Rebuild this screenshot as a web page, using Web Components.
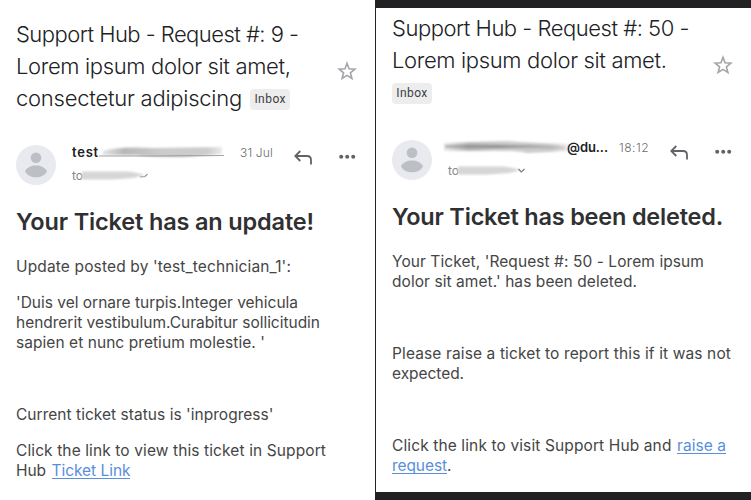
<!DOCTYPE html>
<html lang="en">
<head>
<meta charset="utf-8">
<title>Support Hub mail</title>
<style>
html,body{margin:0;height:500px;overflow:hidden;background:#fff}
body{font-family:Inter,"Liberation Sans",sans-serif;display:grid;grid-template-columns:375px 376px}
</style>
</head>
<body>
<mail-view>
  <mail-subject slot="subject">
    <fit-line width="282.5">Support Hub - Request #: 9 -</fit-line>
    <fit-line width="274.5">Lorem ipsum dolor sit amet,</fit-line>
    <fit-line width="226">consectetur adipiscing</fit-line>
    <mail-label>Inbox</mail-label>
  </mail-subject>
  <mail-sender slot="sender" kind="name">
    <fit-line slot="name" width="27">test</fit-line>
    <fit-line slot="time" width="33">31 Jul</fit-line>
  </mail-sender>
  <mail-body slot="body">
    <fit-line slot="heading" width="298">Your Ticket has an update!</fit-line>
    <mail-para><fit-line width="275">Update posted by 'test_technician_1':</fit-line></mail-para>
    <mail-para><fit-line width="282">'Duis vel ornare turpis.Integer vehicula</fit-line><br><fit-line width="304">hendrerit vestibulum.Curabitur sollicitudin</fit-line><br><fit-line width="249">sapien et nunc pretium molestie. '</fit-line></mail-para>
    <mail-para></mail-para>
    <mail-para><fit-line width="257.5">Current ticket status is 'inprogress'</fit-line></mail-para>
    <mail-para><fit-line width="310">Click the link to view this ticket in Support</fit-line><br><fit-line width="30">Hub</fit-line><mail-link gap><fit-line width="79">Ticket Link</fit-line></mail-link></mail-para>
  </mail-body>
</mail-view>
<mail-view framed>
  <mail-subject slot="subject">
    <fit-line width="297">Support Hub - Request #: 50 -</fit-line>
    <fit-line width="274.5">Lorem ipsum dolor sit amet.</fit-line>
    <mail-label below>Inbox</mail-label>
  </mail-subject>
  <mail-sender slot="sender" kind="domain">
    <fit-line slot="name" width="41">@du...</fit-line>
    <fit-line slot="time" width="30">18:12</fit-line>
  </mail-sender>
  <mail-body slot="body">
    <fit-line slot="heading" width="331">Your Ticket has been deleted.</fit-line>
    <mail-para><fit-line width="312">Your Ticket, 'Request #: 50 - Lorem ipsum</fit-line><br><fit-line width="245">dolor sit amet.' has been deleted.</fit-line></mail-para>
    <mail-para></mail-para>
    <mail-para><fit-line width="339">Please raise a ticket to report this if it was not</fit-line><br><fit-line width="72">expected.</fit-line></mail-para>
    <mail-para></mail-para>
    <mail-para><fit-line width="279.5">Click the link to visit Support Hub and</fit-line><mail-link gap><fit-line width="49">raise a</fit-line></mail-link><br><mail-link><fit-line width="55">request</fit-line></mail-link>.</mail-para>
  </mail-body>
</mail-view>
<script>
function define(name, html, setup) {
  const tpl = document.createElement('template');
  tpl.innerHTML = html;
  customElements.define(name, class extends HTMLElement {
    constructor() {
      super();
      this.attachShadow({ mode: 'open' }).append(tpl.content.cloneNode(true));
    }
    connectedCallback() { if (setup) setup(this); }
  });
}

define('mail-view', `
<style>
:host{display:block;box-sizing:border-box;height:500px;padding:18px 16px 0;background:#fff;color:#222}
:host([framed]){border:solid #222224;border-width:8px 0 8px 1px;padding:4px 16px 0}
.top{display:grid;grid-template-columns:1fr 20px;column-gap:4px;align-items:start;margin-right:2px}
mail-star{margin-top:43px}
.sender{margin-top:31px}
:host([framed]) .sender{margin-top:32px}
</style>
<div class="top"><slot name="subject"></slot><mail-star></mail-star></div>
<div class="sender"><slot name="sender"></slot></div>
<slot name="body"></slot>`);

define('mail-subject', `
<style>
:host{display:block;height:96px;font-size:22px;line-height:32px;font-weight:300;color:#202124;white-space:nowrap}
::slotted(fit-line){display:table}
::slotted(fit-line:nth-child(3)){display:inline-block}
</style><slot></slot>`);

define('mail-label', `
<style>
:host{display:inline-block;box-sizing:border-box;width:40px;height:21px;border-radius:4px;background:#ededee;
font:400 12px/21px Roboto,sans-serif;letter-spacing:.45px;text-align:center;color:#3c4043;vertical-align:3px;margin-left:2px}
:host([below]){display:block;margin:7px 0 0}
</style><slot></slot>`);

define('mail-star', `
<style>:host{display:block;width:20px;height:20px}svg{display:block}</style>
<svg width="20" height="20" viewBox="0 0 20 20" fill="none" stroke="#a3a5a8" stroke-width="1.6"><path d="M10 2.300l2 5.400 5.900.4-4.500 3.700 1.500 5.700L10 14.400l-4.900 3.100 1.500-5.700L2.100 8.100l5.900-.4z"/></svg>`);

define('mail-sender', `
<style>
:host{display:grid;grid-template-columns:40px 152px 33px 1fr;column-gap:16px;height:40px}
.who{display:flex;flex-direction:column}
.row{display:flex;height:17px;align-items:flex-start}
.name{font-size:13px;line-height:15px;font-weight:600;color:#202124}
:host([kind=domain]) .row{flex-direction:row-reverse;justify-content:flex-end;margin-left:-5px}
:host([kind=domain]) .name{margin-left:-3px}
.to{display:flex;font-size:12px;line-height:15px;color:#858789;margin-top:6px}
.time{font-size:12px;line-height:15px;color:#6b6d70;font-weight:300;justify-self:end}
.actions{display:flex;justify-content:space-between;padding:2px 3px 0 4px}
svg{display:block;overflow:visible;flex:none}
.d{display:none}:host([kind=domain]) .d{display:block}:host([kind=domain]) .n{display:none}
</style>
<svg width="40" height="40"><circle cx="20" cy="20" r="20" fill="#e8eaef"/><circle cx="20" cy="12.700" r="5.300" fill="#bcc0c5"/><path d="M9 26.200c2-3.800 6.200-5.700 11-5.700s9 1.900 11 5.700c-2 4-6.100 6.100-11 6.100s-9-2.100-11-6.100z" fill="#bcc0c5"/></svg>
<div class="who">
  <div class="row"><div class="name"><slot name="name"></slot></div>
  <svg width="127" height="15" viewBox="0 0 127 15">
    <defs>
      <linearGradient id="g" gradientUnits="userSpaceOnUse" x1="0" x2="127"><stop stop-color="#888" stop-opacity=".15"/><stop offset=".2" stop-color="#888" stop-opacity=".6"/><stop offset=".5" stop-color="#999" stop-opacity=".5"/><stop offset=".85" stop-color="#aaa" stop-opacity=".6"/><stop offset="1" stop-color="#aaa" stop-opacity=".15"/></linearGradient>
      <linearGradient id="v" gradientUnits="userSpaceOnUse" x1="0" x2="127"><stop stop-color="#777" stop-opacity=".45"/><stop offset=".45" stop-color="#666" stop-opacity=".65"/><stop offset="1" stop-color="#aaa" stop-opacity=".4"/></linearGradient>
      <filter id="b" filterUnits="userSpaceOnUse" x="-5" y="-5" width="137" height="25"><feGaussianBlur stdDeviation="1.3 1"/></filter>
      <filter id="b2" filterUnits="userSpaceOnUse" x="-5" y="-5" width="137" height="25"><feGaussianBlur stdDeviation=".8"/></filter>
    </defs>
    <g class="n"><path d="M4 6Q18 1 55 3L123 2V9L90 12Q60 13 36 10H3z" fill="url(#g)" filter="url(#b)"/><path d="M0 11H60L125 10.500" fill="none" stroke="#777" stroke-opacity=".65" stroke-width="1"/></g>
    <g class="d"><path d="M1 3L65 1Q85 3 127 4V11L84 13Q70 10 35 11H1z" fill="url(#g)" filter="url(#b)"/><path d="M2 6.500H90L122 8" fill="none" stroke="url(#v)" stroke-width="2.500" filter="url(#b2)"/></g>
  </svg></div>
  <div class="to">to<svg width="68" height="15" viewBox="0 0 68 15"><defs><filter id="b3"><feGaussianBlur stdDeviation=".9"/></filter></defs><path d="M-1 3.500H45Q56 5 62 7L50 10 30 11.500H-1z" fill="#d6d6d6" filter="url(#b3)"/>
  <path class="n" d="M57 9L62 8.500 64.500 6" fill="none" stroke="#999" stroke-width="1.100"/><path class="d" d="M59.500 6L62.300 9 65.500 6" fill="none" stroke="#777" stroke-width="1.100"/></svg></div>
</div>
<div class="time"><slot name="time"></slot></div>
<div class="actions">
  <svg width="20" height="20" viewBox="0 0 20 20" fill="none" stroke="#616366" stroke-width="1.800"><path d="M7.300 4L2.300 9l5 5M2.300 9H14Q18 9 18 13v4.500"/></svg>
  <svg width="18" height="20" viewBox="0 0 18 20" fill="#616366"><circle cx="3.200" cy="9.800" r="2"/><circle cx="9.200" cy="9.800" r="2"/><circle cx="15.200" cy="9.800" r="2"/></svg>
</div>`);

define('mail-body', `
<style>
:host{display:block;font-size:15.500px;line-height:20px;color:#454545}
.h{margin:22px 0 20px;height:30px;font-size:23.500px;line-height:30px;font-weight:600;color:#303032}
</style><div class="h"><slot name="heading"></slot></div><slot></slot>`);

define('mail-para', `<style>:host{display:block;min-height:20px;margin-bottom:16px;white-space:nowrap}</style><slot></slot>`);
define('mail-link', `<style>:host{display:inline;color:#5a8fdc}:host([gap]){margin-left:5.500px}a{color:inherit;display:inline-block;line-height:20px;background:linear-gradient(currentColor,currentColor) 0 17px/100% 1px no-repeat}</style><a><slot></slot></a>`);

/* A single line of text whose letter spacing is tuned to a set width. */
define('fit-line', `<style>:host{display:inline-block;white-space:nowrap}</style><span><slot></slot></span>`, el => {
  const span = el.shadowRoot.querySelector('span');
  queueMicrotask(() => {
    const want = +el.getAttribute('width');
    const have = span.getBoundingClientRect().width;
    span.style.letterSpacing = ((want - have) / el.textContent.length).toFixed(3) + 'px';
  });
});
</script>
</body>
</html>
